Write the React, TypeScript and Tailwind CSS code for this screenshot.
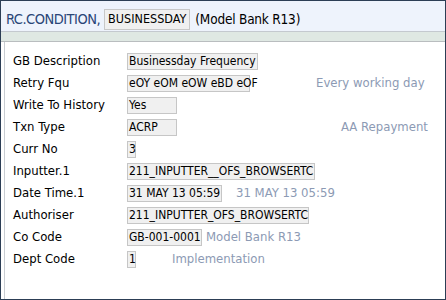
import React from "react";

const rows: { label: string; value: string; w: number; desc?: string; descX?: number }[] = [
  { label: "GB Description", value: "Businessday Frequency", w: 131 },
  { label: "Retry Fqu", value: "eOY eOM eOW eBD eOF", w: 123, desc: "Every working day", descX: 315 },
  { label: "Write To History", value: "Yes", w: 50 },
  { label: "Txn Type", value: "ACRP", w: 50, desc: "AA Repayment", descX: 340 },
  { label: "Curr No", value: "3", w: 9 },
  { label: "Inputter.1", value: "211_INPUTTER__OFS_BROWSERTC", w: 188 },
  { label: "Date Time.1", value: "31 MAY 13 05:59", w: 95, desc: "31 MAY 13 05:59", descX: 235 },
  { label: "Authoriser", value: "211_INPUTTER_OFS_BROWSERTC", w: 182 },
  { label: "Co Code", value: "GB-001-0001", w: 75, desc: "Model Bank R13", descX: 205 },
  { label: "Dept Code", value: "1", w: 9, desc: "Implementation", descX: 171 },
];

export default function App() {
  return (
    <div
      className="w-[446px] h-[300px] bg-white border border-[#2c3e55] flex flex-col overflow-hidden"
      style={{ fontFamily: '"DejaVu Sans Condensed", "DejaVu Sans", sans-serif' }}
    >
      <div className="h-[31px] bg-[#eef3fc] border-b border-[#c4c9cf] flex items-start pt-[8px] pl-[5px] shrink-0">
        <span className="h-[21px] flex items-center text-[14.5px] tracking-[-0.5px] text-[#2a4677]">RC.CONDITION,</span>
        <span className="ml-[4px] h-[21px] px-[3px] bg-[#f0f0f0] border border-[#c8c8c8] text-[12.5px] text-black flex items-center">
          BUSINESSDAY
        </span>
        <span className="ml-[5px] h-[21px] flex items-center text-[13.5px] tracking-[-0.2px] text-black">(Model Bank R13)</span>
      </div>
      <div className="h-[10px] bg-[#dfe8e3] border-b border-[#b9bdbf] shrink-0" />
      <div className="flex-1 ml-[3px] border-l border-[#c9cdd2] pt-[8px] pl-[8px]">
        {rows.map((r) => (
          <div key={r.label} className="h-[22px] flex items-center relative">
            <span className="w-[114px] text-[13px] text-black">{r.label}</span>
            <span
              className="h-[17px] bg-[#f0f0f0] border border-[#c6c6c6] text-[12px] text-black flex items-center pl-[1px] whitespace-nowrap overflow-visible"
              style={{ width: r.w }}
            >
              {r.value}
            </span>
            {r.desc && (
              <span
                className="absolute text-[13px] text-[#8c9ab4] whitespace-nowrap"
                style={{ left: (r.descX ?? 0) - 12 }}
              >
                {r.desc}
              </span>
            )}
          </div>
        ))}
      </div>
    </div>
  );
}
